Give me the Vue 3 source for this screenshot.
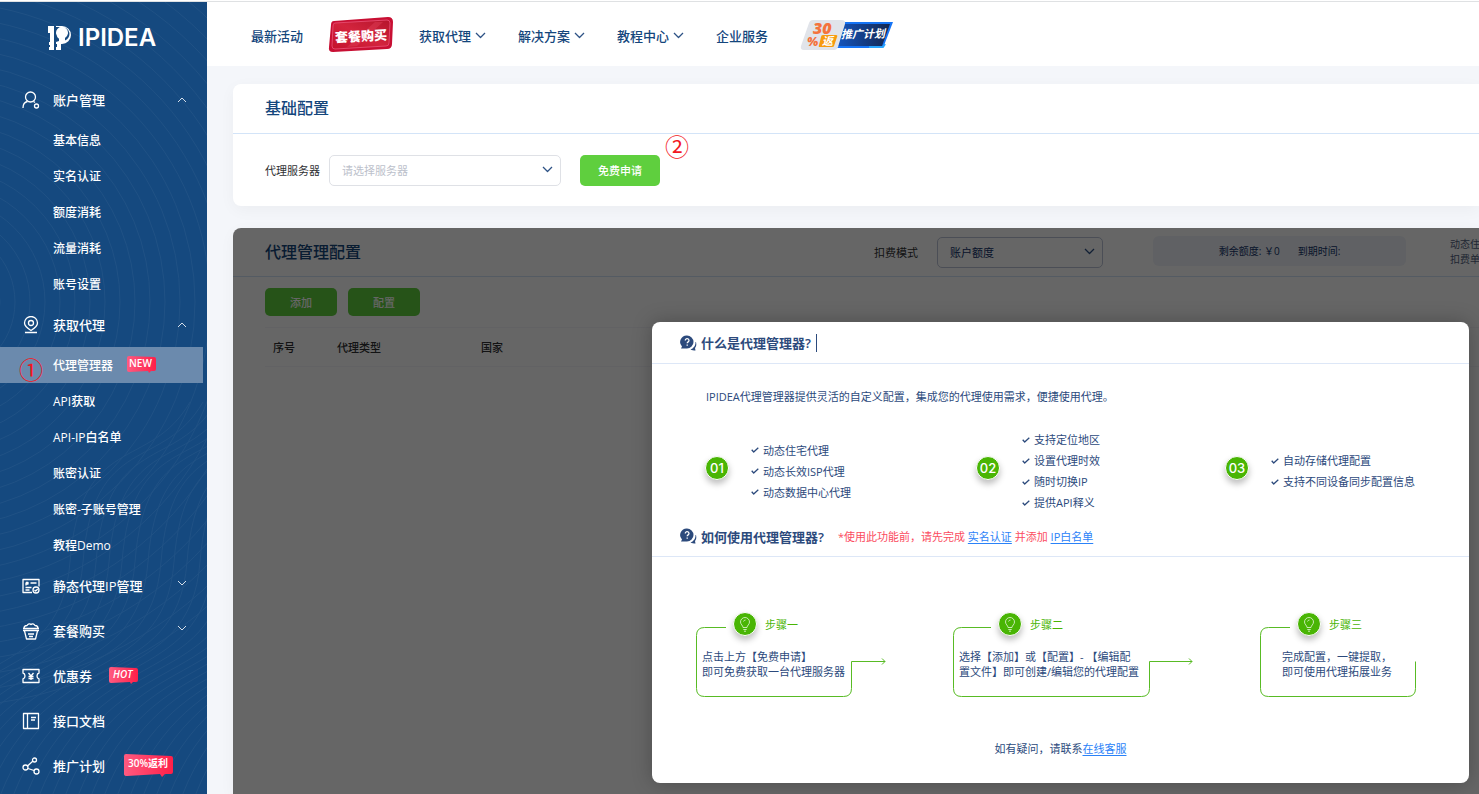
<script setup>
import { ref } from 'vue'

const server = ref('')
const mode = ref('quota')

const waves = Array.from({ length: 26 }, (_, i) => {
  const o = i * 13
  return `M${-130 + o} 794 C${-70 + o} 640 ${60 + o} 690 ${70 + o} 560 S${150 + o} 470 ${190 + o} 400`
})
const arcs = Array.from({ length: 24 }, (_, i) => 60 + i * 15)

const account = ['基本信息', '实名认证', '额度消耗', '流量消耗', '账号设置']
const proxy = ['代理管理器', 'API获取', 'API-IP白名单', '账密认证', '账密-子账号管理', '教程Demo']

const nav = [
  { label: '获取代理', more: true },
  { label: '解决方案', more: true },
  { label: '教程中心', more: true },
  { label: '企业服务', more: false }
]

const features = [
  { no: '01', list: ['动态住宅代理', '动态长效ISP代理', '动态数据中心代理'] },
  { no: '02', list: ['支持定位地区', '设置代理时效', '随时切换IP', '提供API释义'] },
  { no: '03', list: ['自动存储代理配置', '支持不同设备同步配置信息'] }
]

const steps = [
  { title: '步骤一', lines: ['点击上方【免费申请】', '即可免费获取一台代理服务器'], w: 156, lead: 30, arrow: 34 },
  { title: '步骤二', lines: ['选择【添加】或【配置】- 【编辑配', '置文件】即可创建/编辑您的代理配置'], w: 197, lead: 38, arrow: 43 },
  { title: '步骤三', lines: ['完成配置，一键提取，', '即可使用代理拓展业务'], w: 156, lead: 30, arrow: 0, indent: true }
]

const outline = (s) =>
  `M${s.lead} .5 H8.5 Q.5 .5 .5 8.5 V61.5 Q.5 69.5 8.5 69.5 H${s.w - 8.5} Q${s.w - 0.5} 69.5 ${s.w - 0.5} 61.5 V34.5` +
  (s.arrow ? ` H${s.w + s.arrow - 1} m-3 -3 l3 3 l-3 3` : '')
</script>

<template>
  <div class="page">
    <aside class="side">
      <svg class="texture" viewBox="0 0 207 792" preserveAspectRatio="xMidYMax slice" aria-hidden="true">
        <circle v-for="r in arcs" :key="r" cx="-60" cy="300" :r="r" />
        <path v-for="w in waves" :key="w" :d="w" />
      </svg>
      <a href="#" class="logo" aria-label="IPIDEA">
        <svg width="110" height="26" viewBox="0 0 110 26">
          <path d="M1 1h6v24H2v-3h1v-2H2v-3h1V8H1z" fill="#fff" />
          <path d="M9 1h6a9 9 0 0 1 0 18h-1v6H9v-3h1v-3H9v-2l3-1v-3a6 6 0 1 1 6 0v2.500a7 7 0 0 0-3-13.500H9z" fill="#fff" />
          <circle cx="14" cy="10" r="4" fill="#fff" />
          <path d="M12 12h4v5h-4z" fill="#fff" />
          <text x="31" y="21">IPIDEA</text>
        </svg>
      </a>

      <nav class="menu">
        <a href="#" class="group">
          <svg class="gi" viewBox="0 0 18 18"><circle cx="8.500" cy="6" r="5" /><path d="M1 17c0-4 2-6 4.500-6.500M11.500 10.500l1.500 1" /><circle cx="14.500" cy="15" r="2" /></svg>
          <span>账户管理</span>
          <svg class="chev" viewBox="0 0 10 6"><path d="M1 5l4-4 4 4" /></svg>
        </a>
        <a v-for="t in account" :key="t" href="#" class="sub">{{ t }}</a>
        <a href="#" class="group">
          <svg class="gi" viewBox="0 0 18 18"><path d="M9 14.500C5 12 2.500 10 2.500 7a6.500 6.500 0 0 1 13 0c0 3-2.500 5-6.500 7.500zM3 16.500h12" /><circle cx="9" cy="7" r="2.500" /></svg>
          <span>获取代理</span>
          <svg class="chev" viewBox="0 0 10 6"><path d="M1 5l4-4 4 4" /></svg>
        </a>
        <a v-for="(t, i) in proxy" :key="t" href="#" class="sub" :class="{ active: i === 0 }">
          <span v-if="i === 0" class="mark mark-one">①</span>
          {{ t }}
          <svg v-if="i === 0" class="flag" width="32" height="20" viewBox="0 0 32 20">
            <defs><linearGradient id="pink"><stop offset="0" stop-color="#ff5a80" /><stop offset="1" stop-color="#ff1f48" /></linearGradient></defs>
            <path d="M3 1l25 1q2 0 2 2v10q0 2-2 2h-3l-2 2-1-2-19 1q-2 0-2-2V3q0-2 2-2z" fill="url(#pink)" />
            <text x="3" y="12">NEW</text>
          </svg>
        </a>
        <a href="#" class="group">
          <svg class="gi" viewBox="0 0 18 18"><path d="M10 15.500H1v-13h16v7M4 5.500v3M4 5.500h2v1.500H4M8.500 6h6M3.500 10.500h6M3.500 13h4" /><circle cx="14" cy="13" r="3" /><path d="M12.500 13l1.200 1 2-2" /></svg>
          <span>静态代理IP管理</span>
          <svg class="chev down" viewBox="0 0 10 6"><path d="M1 1l4 4 4-4" /></svg>
        </a>
        <a href="#" class="group">
          <svg class="gi" viewBox="0 0 18 18"><path d="M1 6.500h16M1 8.500h16M2 6.500c0-2 1-3 3-3 1-2 3-2 4-1 1-1 3-1 4 1 2 0 3 1 3 3M2.500 9l2 8h9l2-8M6 12h6M7 14.500h4" /></svg>
          <span>套餐购买</span>
          <svg class="chev down" viewBox="0 0 10 6"><path d="M1 1l4 4 4-4" /></svg>
        </a>
        <a href="#" class="group">
          <svg class="gi" viewBox="0 0 18 18"><path d="M1 2.500h16v3.500q-2 .5-2 3t2 3v3.500H1V12q2-.5 2-3t-2-3zM6.500 6L9 9l2.500-3M9 9v4M6.500 9.500h5M6.500 11.500h5" /></svg>
          <span>优惠券</span>
          <svg class="flag hot" width="32" height="20" viewBox="0 0 32 20">
            <path d="M3 1l25 1q2 0 2 2v10q0 2-2 2h-3l-2 2-1-2-19 1q-2 0-2-2V3q0-2 2-2z" fill="url(#pink)" />
            <text x="5" y="12">HOT</text>
          </svg>
        </a>
        <a href="#" class="group">
          <svg class="gi" viewBox="0 0 18 18"><path d="M1.500 1.500h15v15h-15zM5.500 1.500v15M9 5.500h5M9 8h4" /></svg>
          <span>接口文档</span>
        </a>
        <a href="#" class="group">
          <svg class="gi" viewBox="0 0 18 18"><circle cx="3.500" cy="10.500" r="2.500" /><circle cx="12.500" cy="3" r="2" /><circle cx="14.500" cy="14.500" r="2.500" /><path d="M5.500 9l5.500-5M6 11.500l6 2" /></svg>
          <span>推广计划</span>
          <svg class="flag rebate" width="51" height="26" viewBox="0 0 51 26">
            <path d="M3 1l45 2q2 0 2 2v14q0 2-2 2h-6l-3 3-2-3-33 2q-3 0-3-2V3q0-2 2-2z" fill="url(#pink)" />
            <text x="5" y="14">30%返利</text>
          </svg>
        </a>
      </nav>
    </aside>

    <div class="body">
      <header class="top">
        <a href="#">最新活动</a>
        <a href="#" class="promo" aria-label="套餐购买">
          <svg width="68" height="38" viewBox="0 0 68 38">
            <defs><linearGradient id="red" x1="0" y1="1" x2="1" y2="0"><stop offset="0" stop-color="#c4122d" /><stop offset=".5" stop-color="#d3243d" /><stop offset="1" stop-color="#b5152c" /></linearGradient></defs>
            <path d="M7 5L61 1q5 0 5 5l-1 22q0 5-5 5L6 36q-5 0-4-5L4 9q0-4 3-4z" fill="#c80f33" />
            <path d="M8 7L60 4q3 0 3 3l-1 20q0 3-3 3L8 33q-3 0-3-3L6 10q0-3 2-3z" fill="url(#red)" stroke="#e4476a" />
            <path d="M20 31L48 6h8L30 30z" fill="#e04058" opacity=".45" />
            <text x="8" y="25" transform="rotate(-3 34 19)">套餐购买</text>
          </svg>
        </a>
        <a v-for="n in nav" :key="n.label" href="#">
          {{ n.label }}
          <svg v-if="n.more" class="nchev" viewBox="0 0 11 7"><path d="M1 1l4.500 4.500L10 1" /></svg>
        </a>
        <a href="#" class="plan" aria-label="30%返 推广计划">
          <svg width="94" height="32" viewBox="0 0 94 32">
            <defs><linearGradient id="blue"><stop offset="0" stop-color="#1555bd" /><stop offset="1" stop-color="#14264f" /></linearGradient></defs>
            <path d="M40 3h53L83 29H35z" fill="#1674f5" />
            <path d="M43 5h47L82 27H37z" fill="url(#blue)" />
            <path d="M69 28h14l2-3" stroke="#28a5ff" stroke-width="2" fill="none" />
            <path d="M13 1h28q5 0 4 4l-7 23q-1 3-4 3H4q-4 0-3-4L9 4q1-3 4-3z" fill="#e1e4ea" />
            <path d="M23 16h13q2 0 1 2l-3 9q0 1-2 1H20q-2 0-1-2l2-8q0-2 2-2z" fill="#f79b0e" />
            <text class="pct" x="13" y="15">30</text>
            <text class="pct small" x="7" y="27">%</text>
            <text class="ret" x="22" y="26">返</text>
            <text class="pl" x="41" y="19" transform="rotate(-1 60 16)">推广计划</text>
          </svg>
        </a>
      </header>

      <main class="main">
        <section class="card">
          <h2>基础配置</h2>
          <div class="form">
            <label for="server">代理服务器</label>
            <div class="pick wide">
              <select id="server" v-model="server" class="empty">
                <option value="">请选择服务器</option>
              </select>
              <svg class="nchev" viewBox="0 0 11 7"><path d="M1 1l4.500 4.500L10 1" /></svg>
            </div>
            <button type="button" class="apply">免费申请</button>
            <span class="mark mark-two">②</span>
          </div>
        </section>

        <section class="card manage">
          <div class="mhead">
            <h2>代理管理配置</h2>
            <label for="mode">扣费模式</label>
            <div class="pick">
              <select id="mode" v-model="mode">
                <option value="quota">账户额度</option>
              </select>
              <svg class="nchev" viewBox="0 0 11 7"><path d="M1 1l4.500 4.500L10 1" /></svg>
            </div>
            <p class="quota"><span>剩余额度: ￥0</span><span>到期时间:</span></p>
            <p class="unit">动态住<br />扣费单</p>
          </div>
          <div class="tools">
            <button type="button">添加</button>
            <button type="button">配置</button>
          </div>
          <table>
            <thead>
              <tr><th class="c1">序号</th><th class="c2">代理类型</th><th>国家</th></tr>
            </thead>
          </table>
          <div class="shade"></div>

          <div class="dialog" role="dialog" aria-label="什么是代理管理器?">
            <h3 class="dh">
              <svg class="ask" viewBox="0 0 17 16"><path d="M16 7c.8 3 0 5-1 6l.5 2.500c-2 0-3.500-.3-5-1 3-1 5.200-4 5-7.500z" /><path d="M7 .5a6.500 6.500 0 1 1 0 13H1l1-2A6.500 6.500 0 0 1 7 .5z" /><path class="q" d="M5.300 5.500c0-2.500 3.700-2.300 3.700 0C9 7 7.200 6.800 7.200 8.300M7.200 9.500v1.300" /></svg>
              什么是代理管理器?<i class="caret"></i>
            </h3>
            <p class="intro">IPIDEA代理管理器提供灵活的自定义配置，集成您的代理使用需求，便捷使用代理。</p>
            <div class="features">
              <div v-for="f in features" :key="f.no" class="feature">
                <span class="ball">{{ f.no }}</span>
                <ul>
                  <li v-for="l in f.list" :key="l">
                    <svg viewBox="0 0 8 6"><path d="M.7 2.800l2 2.200L7.300 .8" /></svg>{{ l }}
                  </li>
                </ul>
              </div>
            </div>
            <h3 class="dh second">
              <svg class="ask" viewBox="0 0 17 16"><path d="M16 7c.8 3 0 5-1 6l.5 2.500c-2 0-3.500-.3-5-1 3-1 5.200-4 5-7.500z" /><path d="M7 .5a6.500 6.500 0 1 1 0 13H1l1-2A6.500 6.500 0 0 1 7 .5z" /><path class="q" d="M5.300 5.500c0-2.500 3.700-2.300 3.700 0C9 7 7.200 6.800 7.200 8.300M7.200 9.500v1.300" /></svg>
              如何使用代理管理器?
              <small>*使用此功能前，请先完成 <a href="#">实名认证</a> 并添加 <a href="#">IP白名单</a></small>
            </h3>
            <div class="steps">
              <div v-for="s in steps" :key="s.title" class="step">
                <svg class="frame" :width="s.w + s.arrow" height="70"><path :d="outline(s)" /></svg>
                <div class="st" :class="{ far: s.lead > 30 }">
                  <span class="ball"><svg width="12" height="15" viewBox="0 0 12 15"><path d="M4 10.500C4 8.500 1.500 7.500 1.500 5a4.500 4.500 0 0 1 9 0c0 2.500-2.500 3.500-2.500 5.500zM4.300 12.500h3.400M5 14.200h2M4.500 4.500Q5 3 6.500 3" /></svg></span>
                  {{ s.title }}
                </div>
                <p :class="{ indent: s.indent }"><template v-for="l in s.lines" :key="l">{{ l }}<br /></template></p>
              </div>
            </div>
            <p class="help">如有疑问，请联系<a href="#">在线客服</a></p>
          </div>
        </section>
      </main>
    </div>
  </div>
</template>

<style>
body {
  margin: 0;
}
</style>

<style scoped>
* {
  box-sizing: border-box;
}
.page {
  display: flex;
  min-height: 100vh;
  padding-top: 2px;
  background: linear-gradient(#fff 1px, #dfe1e3 1px, #dfe1e3 2px, #f4f6fa 2px);
  font-family: "Open Sans", "Noto Sans CJK SC", sans-serif;
  font-size: 11px;
  color: #303133;
  overflow: hidden;
}
a {
  color: inherit;
  text-decoration: none;
}
h2, h3, p, ul {
  margin: 0;
  padding: 0;
}
path, circle {
  stroke-linejoin: round;
}

/* Sidebar */
.side {
  position: relative;
  flex: 0 0 207px;
  background: #15497f;
  color: #fff;
  overflow: hidden;
}
.texture {
  position: absolute;
  inset: 0;
  width: 100%;
  height: 100%;
  fill: none;
  stroke: #fff;
  opacity: .045;
}
.logo {
  position: relative;
  display: block;
  height: 75px;
  padding: 23px 0 0 47px;
}
.logo text {
  font: 600 24px Inter, sans-serif;
  fill: #fff;
}
.menu {
  position: relative;
  font-weight: 500;
}
.group {
  display: flex;
  align-items: center;
  height: 45px;
  padding: 0 20px 0 22px;
  font-size: 13px;
}
.gi {
  width: 18px;
  height: 18px;
  margin-right: 13px;
  fill: none;
  stroke: #fff;
  stroke-width: 1.3;
}
.chev {
  width: 10px;
  height: 6px;
  margin-left: auto;
  fill: none;
  stroke: #d5dfea;
}
.chev.down {
  margin-bottom: 5px;
}
.sub {
  position: relative;
  display: flex;
  align-items: center;
  height: 36px;
  margin-right: 4px;
  padding-left: 53px;
  font-size: 12px;
}
.sub.active {
  background: #6b8aad;
}
.flag {
  margin-left: 13px;
}
.flag text {
  font-size: 10px;
  font-weight: 600;
  fill: #fff;
}
.hot {
  margin-left: 16px;
}
.hot text {
  font-style: italic;
}
.rebate {
  margin-left: 18px;
}
.mark {
  position: absolute;
  font: 24px/24px "Noto Sans CJK SC", sans-serif;
  color: #f21622;
}
.mark-one {
  left: 19px;
  top: 10px;
}
.mark-two {
  left: 432px;
  top: 0;
}

/* Header */
.body {
  flex: 1;
  min-width: 0;
  display: flex;
  flex-direction: column;
}
.top {
  display: flex;
  align-items: center;
  gap: 32px;
  height: 64px;
  padding: 2px 44px 0;
  background: #fff;
  font-size: 13px;
  font-weight: 500;
  color: #14467c;
  white-space: nowrap;
}
.top a {
  display: flex;
  align-items: center;
}
.nchev {
  width: 11px;
  height: 7px;
  fill: none;
  stroke: #2d5285;
  stroke-width: 1.3;
}
.top .nchev {
  margin-left: 4px;
}
.promo {
  margin: 0 -8px;
}
.promo text {
  font-size: 13px;
  font-weight: 900;
  fill: #fff;
}
.plan text {
  font-style: italic;
  font-weight: 700;
  fill: #fff;
}
.plan .pct {
  font: italic 800 16px "Open Sans", sans-serif;
  fill: #f4733d;
}
.plan .small {
  font-size: 12px;
}
.plan .ret {
  font-size: 11px;
}
.plan .pl {
  font-size: 11px;
}

/* Cards */
.main {
  flex: 1;
  display: flex;
  flex-direction: column;
  gap: 22px;
  padding: 18px 0 0 26px;
}
.card {
  position: relative;
  background: #fff;
  border-radius: 8px 0 0 8px;
  box-shadow: 0 4px 16px #0000000a;
}
h2 {
  height: 50px;
  padding: 0 32px;
  border-bottom: 1px solid #d3e4f8;
  font-size: 16px;
  font-weight: 500;
  line-height: 49px;
  color: #14467c;
}
.form {
  position: relative;
  display: flex;
  align-items: center;
  height: 72px;
  padding: 0 32px;
}
.pick {
  position: relative;
  width: 166px;
  margin-left: 19px;
}
.pick.wide {
  width: 232px;
  margin-left: 9px;
}
.pick select {
  display: block;
  width: 100%;
  height: 31px;
  padding: 0 12px;
  appearance: none;
  border: 1px solid #dfe1e6;
  border-radius: 5px;
  background: none;
  font: inherit;
  color: #14336b;
}
.pick .empty {
  color: #bcc1cb;
}
.pick .nchev {
  position: absolute;
  right: 8px;
  top: 11px;
}
button {
  border: 0;
  border-radius: 5px;
  background: #5fcf3e;
  color: #fff;
  font: inherit;
  font-weight: 500;
}
.apply {
  width: 80px;
  height: 31px;
  margin-left: 19px;
}
.manage {
  flex: 1;
  min-height: 566px;
  border-radius: 8px 0 0 0;
}
.mhead {
  display: flex;
  align-items: center;
  height: 49px;
  padding-left: 32px;
  border-bottom: 1px solid #d3e4f8;
  white-space: nowrap;
}
.mhead h2 {
  height: auto;
  margin-right: auto;
  padding: 0;
  border: 0;
  line-height: 48px;
}
.mhead .pick select {
  border-color: #bcc4d6;
}
.quota {
  display: flex;
  justify-content: center;
  gap: 18px;
  width: 253px;
  margin: 0 44px 2px 50px;
  border-radius: 6px;
  background: #eff3f9;
  font-size: 10px;
  line-height: 30px;
  color: #14336b;
}
.unit {
  flex: 0 0 29px;
  overflow: hidden;
  font-size: 10px;
  line-height: 15px;
  color: #51617e;
}
.tools {
  display: flex;
  gap: 11px;
  padding: 11px 32px;
}
.tools button {
  width: 72px;
  height: 28px;
}
table {
  width: calc(100% - 32px);
  margin-left: 32px;
  table-layout: fixed;
  border-collapse: collapse;
}
th {
  height: 39px;
  padding: 0 8px;
  border: solid #f5f6f9;
  border-width: 1px 0;
  text-align: left;
  font-weight: 500;
}
.c1 {
  width: 64px;
}
.c2 {
  width: 144px;
}
.shade {
  position: absolute;
  inset: 0;
  border-radius: 8px 0 0 0;
  background: rgba(0, 0, 0, .6);
}

/* Dialog */
.dialog {
  position: absolute;
  left: 419px;
  right: 10px;
  top: 94px;
  border-radius: 8px;
  background: #fff;
  box-shadow: 0 0 20px #00000040;
  color: #2c4a7c;
}
.dh {
  display: flex;
  align-items: center;
  height: 42px;
  padding-left: 28px;
  border-bottom: 1px solid #dde7f7;
  font-size: 13px;
  font-weight: 600;
  white-space: nowrap;
}
.second {
  height: 41px;
}
.ask {
  width: 17px;
  height: 16px;
  margin-right: 4px;
  fill: #2c4a7c;
}
.ask .q {
  fill: none;
  stroke: #fff;
  stroke-width: 1.3;
}
.caret {
  width: 1px;
  height: 18px;
  margin-left: 5px;
  background: #2c4a7c;
}
small {
  margin-left: 14px;
  font-size: 11px;
  font-weight: 400;
  color: #fb4b60;
}
small a, .help a {
  color: #2a82f8;
  text-decoration: underline;
  text-underline-offset: 2px;
}
.intro {
  padding: 23px 0 0 54px;
  line-height: 20px;
}
.features {
  display: grid;
  grid-template-columns: 271fr 249fr 244fr;
  align-items: center;
  height: 84px;
  margin: 22px 0 3px;
  padding-left: 53px;
}
.feature {
  display: flex;
  align-items: center;
  gap: 22px;
  white-space: nowrap;
}
.ball {
  display: flex;
  align-items: center;
  justify-content: center;
  width: 24px;
  height: 24px;
  border: 1px solid #fff;
  border-radius: 50%;
  background: #49b504;
  box-shadow: 0 4px 6px #00000040;
  font: 500 13px Inter, sans-serif;
  color: #fff;
}
.feature .ball {
  margin-bottom: 6px;
}
li {
  display: flex;
  align-items: center;
  gap: 4px;
  line-height: 21px;
}
li svg {
  width: 8px;
  height: 6px;
  fill: none;
  stroke: #2c4a7c;
  stroke-width: 1.3;
}
.steps {
  display: grid;
  grid-template-columns: 257fr 307fr 209fr;
  padding: 55px 0 0 44px;
  white-space: nowrap;
}
.step {
  position: relative;
}
.frame {
  position: absolute;
  left: 0;
  top: 15px;
  fill: none;
  stroke: #58bb24;
}
.st {
  display: flex;
  align-items: center;
  gap: 8px;
  padding-left: 37px;
  color: #49b504;
}
.st.far {
  padding-left: 45px;
}
.st svg {
  fill: none;
  stroke: #e6f6dc;
  stroke-width: .8;
}
.step p {
  position: relative;
  padding: 13px 0 0 6px;
  line-height: 15px;
}
.step .indent {
  padding-left: 22px;
}
.help {
  padding: 60px 0 24px;
  line-height: 20px;
  text-align: center;
}
</style>
